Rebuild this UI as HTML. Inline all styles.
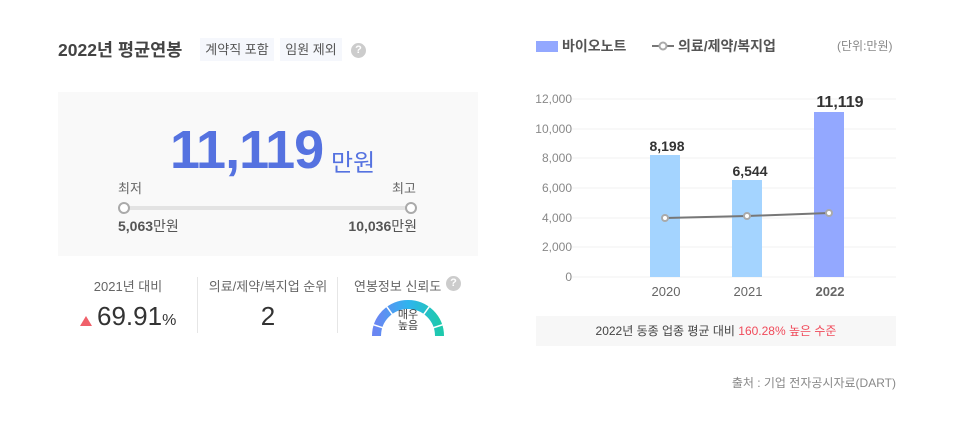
<!DOCTYPE html>
<html><head><meta charset="utf-8"><style>
*{margin:0;padding:0;box-sizing:border-box}
body{width:954px;height:433px;background:#fff;font-family:"Liberation Sans","Noto Sans CJK KR",sans-serif;position:relative;overflow:hidden;color:#333}
.a{position:absolute;white-space:nowrap}
</style></head><body>
<div class="a" style="left:58px;top:37px;font-size:17.5px;font-weight:bold;color:#444">2022년 평균연봉</div>
<div class="a" style="left:200px;top:38px;height:23px;width:74px;background:#f5f7fc;font-size:13px;color:#555;line-height:23px;text-align:center">계약직 포함</div>
<div class="a" style="left:280px;top:38px;height:23px;width:62px;background:#f5f7fc;font-size:13px;color:#555;line-height:23px;text-align:center">임원 제외</div>
<div class="a" style="left:351px;top:43px;width:15px;height:15px;border-radius:50%;background:#ccc;color:#fff;font-size:11px;font-weight:bold;text-align:center;line-height:15px">?</div>

<div class="a" style="left:58px;top:92px;width:420px;height:164px;background:#f9f9f9"></div>
<div class="a" style="left:170px;top:118px;font-size:54px;font-weight:bold;color:#5572e0;letter-spacing:-1px;line-height:64px">11,119</div>
<div class="a" style="left:331px;top:143px;font-size:24px;color:#5572e0">만원</div>
<div class="a" style="left:118px;top:178px;font-size:13px;color:#666">최저</div>
<div class="a" style="left:392px;top:178px;font-size:13px;color:#666">최고</div>
<div class="a" style="left:124px;top:206px;width:288px;height:4px;background:#e3e3e3"></div>
<div class="a" style="left:118px;top:202px;width:12px;height:12px;border-radius:50%;border:2px solid #aaa;background:#fff"></div>
<div class="a" style="left:405px;top:202px;width:12px;height:12px;border-radius:50%;border:2px solid #aaa;background:#fff"></div>
<div class="a" style="left:118px;top:216px;font-size:14px;color:#555"><b>5,063</b>만원</div>
<div class="a" style="right:537px;top:216px;font-size:14px;color:#555"><b>10,036</b>만원</div>

<div class="a" style="left:197px;top:277px;width:1px;height:56px;background:#e6e6e6"></div>
<div class="a" style="left:337px;top:277px;width:1px;height:56px;background:#e6e6e6"></div>
<div class="a" style="left:58px;top:276px;width:140px;text-align:center;font-size:13px;color:#666">2021년 대비</div>
<div class="a" style="left:80px;top:316px;width:0;height:0;border-left:6px solid transparent;border-right:6px solid transparent;border-bottom:10px solid #f0606a"></div>
<div class="a" style="left:97px;top:301px;font-size:26px;color:#333">69.91<span style="font-size:16px">%</span></div>
<div class="a" style="left:198px;top:276px;width:140px;text-align:center;font-size:13px;color:#666">의료/제약/복지업 순위</div>
<div class="a" style="left:198px;top:301px;width:140px;text-align:center;font-size:26px;color:#333">2</div>
<div class="a" style="left:354px;top:276px;font-size:13px;color:#666">연봉정보 신뢰도</div>
<div class="a" style="left:446px;top:276px;width:15px;height:15px;border-radius:50%;background:#ccc;color:#fff;font-size:11px;font-weight:bold;text-align:center;line-height:15px">?</div>
<svg class="a" style="left:360px;top:290px" width="96" height="46">
<defs><linearGradient id="g" x1="0" x2="1"><stop offset="0" stop-color="#6a86f2"/><stop offset=".5" stop-color="#2fb4ef"/><stop offset="1" stop-color="#1ec9ad"/></linearGradient></defs>
<path d="M16.5 46 A31.5 31.5 0 0 1 79.5 46" fill="none" stroke="url(#g)" stroke-width="9"/>
<g stroke="#fff" stroke-width="1.5">
<line x1="48" y1="46" x2="10" y2="33.6"/><line x1="48" y1="46" x2="24.5" y2="13.6"/><line x1="48" y1="46" x2="71.5" y2="13.6"/><line x1="48" y1="46" x2="86" y2="33.6"/></g>
</svg>
<div class="a" style="left:390px;top:310px;width:36px;text-align:center;font-size:11px;line-height:11px;color:#444">매우<br>높음</div>

<div class="a" style="left:536px;top:41px;width:22px;height:11px;background:#93a8ff"></div>
<div class="a" style="left:562px;top:36px;font-size:14px;font-weight:bold;color:#555">바이오노트</div>
<svg class="a" style="left:651px;top:40px" width="24" height="12"><line x1="1" y1="6" x2="23" y2="6" stroke="#777" stroke-width="2"/><circle cx="12" cy="6" r="3.5" fill="#fff" stroke="#aaa" stroke-width="2"/></svg>
<div class="a" style="left:678px;top:36px;font-size:14px;font-weight:bold;color:#555">의료/제약/복지업</div>
<div class="a" style="left:837px;top:37px;font-size:12px;color:#888">(단위:만원)</div>
<svg class="a" style="left:520px;top:85px" width="390" height="220">
<g stroke="#f0f0f0" stroke-width="1">
<line x1="52" y1="14" x2="376" y2="14"/><line x1="52" y1="44" x2="376" y2="44"/><line x1="52" y1="73" x2="376" y2="73"/><line x1="52" y1="103" x2="376" y2="103"/><line x1="52" y1="133" x2="376" y2="133"/><line x1="52" y1="162" x2="376" y2="162"/><line x1="52" y1="192" x2="376" y2="192"/></g>
<g font-size="12" fill="#888" text-anchor="end" font-family="Liberation Sans,sans-serif">
<text x="52" y="18">12,000</text><text x="52" y="48">10,000</text><text x="52" y="77">8,000</text><text x="52" y="107">6,000</text><text x="52" y="137">4,000</text><text x="52" y="166">2,000</text><text x="52" y="196">0</text></g>
<rect x="130" y="70" width="30" height="122" fill="#a4d4ff"/>
<rect x="212" y="95" width="30" height="97" fill="#a4d4ff"/>
<rect x="294" y="27" width="30" height="165" fill="#93a8ff"/>
<g font-size="14" font-weight="bold" fill="#333" text-anchor="middle" font-family="Liberation Sans,sans-serif">
<text x="147" y="66">8,198</text><text x="230" y="91">6,544</text><text x="320" y="22" font-size="16">11,119</text></g>
<polyline points="145,133 227,131 309,128" fill="none" stroke="#777" stroke-width="2"/>
<g fill="#fff" stroke="#aaa" stroke-width="2"><circle cx="145" cy="133" r="3"/><circle cx="227" cy="131" r="3"/><circle cx="309" cy="128" r="3"/></g>
<g font-size="13" fill="#666" text-anchor="middle" font-family="Liberation Sans,sans-serif">
<text x="146" y="211">2020</text><text x="228" y="211">2021</text><text x="310" y="211" font-weight="bold">2022</text></g>
</svg>
<div class="a" style="left:536px;top:316px;width:360px;height:30px;background:#f7f7f7;text-align:center;font-size:12px;line-height:30px;color:#444">2022년 동종 업종 평균 대비 <span style="color:#f04a5a">160.28% 높은 수준</span></div>
<div class="a" style="right:58px;top:374px;font-size:12px;color:#888">출처 : 기업 전자공시자료(DART)</div>
</body></html>
